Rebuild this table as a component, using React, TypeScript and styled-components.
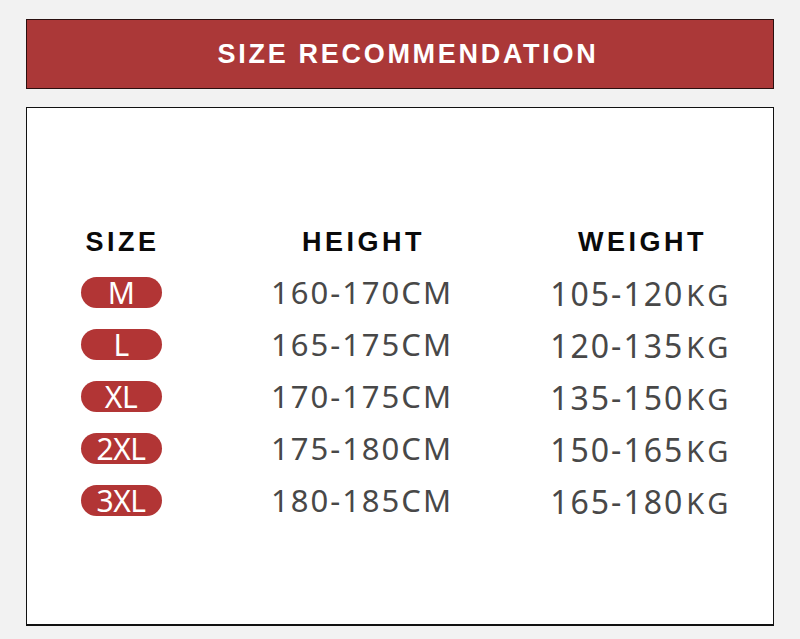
import styled, { createGlobalStyle } from "styled-components";

const GlobalStyle = createGlobalStyle`
  html, body {
    margin: 0;
    padding: 0;
    background: #f2f2f2;
  }
`;

const Page = styled.div`
  width: 800px;
  height: 639px;
  box-sizing: border-box;
  padding: 19px 26px 0;
  display: flex;
  flex-direction: column;
  gap: 18px;
`;

const Banner = styled.div`
  height: 70px;
  box-sizing: border-box;
  background: #ab3838;
  border: 1px solid #2a1010;
  display: flex;
  align-items: center;
  justify-content: center;
`;

const Title = styled.h1`
  margin: 0 0 0 16px;
  color: #fff;
  font-family: "Liberation Sans", Arial, sans-serif;
  font-weight: 700;
  font-size: 27px;
  line-height: 30px;
  letter-spacing: 2.7px;
`;

const Card = styled.div`
  height: 519px;
  box-sizing: border-box;
  background: #fff;
  border: 1px solid #111;
  border-bottom-width: 2px;
  padding-top: 120px;
`;

const Table = styled.div`
  display: grid;
  grid-template-columns: 188px 294px 264px;
`;

const HeadCell = styled.div`
  height: 28px;
  line-height: 28px;
  margin-bottom: 10px;
  text-align: center;
  color: #0a0a0a;
  font-family: "Liberation Sans", Arial, sans-serif;
  font-weight: 700;
  font-size: 27px;
  letter-spacing: 3.5px;
  padding-left: 3px;
`;

const Cell = styled.div<{ $shift?: number }>`
  height: 52px;
  display: flex;
  align-items: center;
  justify-content: center;
  padding-top: ${(p) => p.$shift ?? 0}px;
  box-sizing: border-box;
`;

const Pill = styled.div`
  width: 81px;
  height: 31px;
  border-radius: 16px;
  background: #b23535;
  color: #fff;
  font-family: "Noto Sans", "Open Sans", sans-serif;
  font-size: 30px;
  line-height: 31px;
  text-align: center;
  letter-spacing: -0.5px;
`;

const Value = styled.span<{ $size?: number }>`
  color: #484848;
  font-family: "Noto Sans", "Open Sans", sans-serif;
  font-size: ${(p) => p.$size ?? 31}px;
  letter-spacing: 2px;
  line-height: 40px;
`;

const Unit = styled.span`
  margin-left: 2px;
  font-size: 29px;
  letter-spacing: 3.5px;
`;

const rows = [
  { size: "M", height: "160-170", weight: "105-120" },
  { size: "L", height: "165-175", weight: "120-135" },
  { size: "XL", height: "170-175", weight: "135-150" },
  { size: "2XL", height: "175-180", weight: "150-165" },
  { size: "3XL", height: "180-185", weight: "165-180" },
];

function App() {
  return (
    <>
      <GlobalStyle />
      <Page>
        <Banner>
          <Title>SIZE RECOMMENDATION</Title>
        </Banner>
        <Card>
          <Table>
            <HeadCell>SIZE</HeadCell>
            <HeadCell>HEIGHT</HeadCell>
            <HeadCell>WEIGHT</HeadCell>
            {rows.map((r) => (
              <>
                <Cell key={r.size + "s"}>
                  <Pill>{r.size}</Pill>
                </Cell>
                <Cell key={r.size + "h"}>
                  <Value>{r.height}CM</Value>
                </Cell>
                <Cell key={r.size + "w"} $shift={4}>
                  <Value $size={32}>
                    {r.weight}
                    <Unit>KG</Unit>
                  </Value>
                </Cell>
              </>
            ))}
          </Table>
        </Card>
      </Page>
    </>
  );
}

export default App;
